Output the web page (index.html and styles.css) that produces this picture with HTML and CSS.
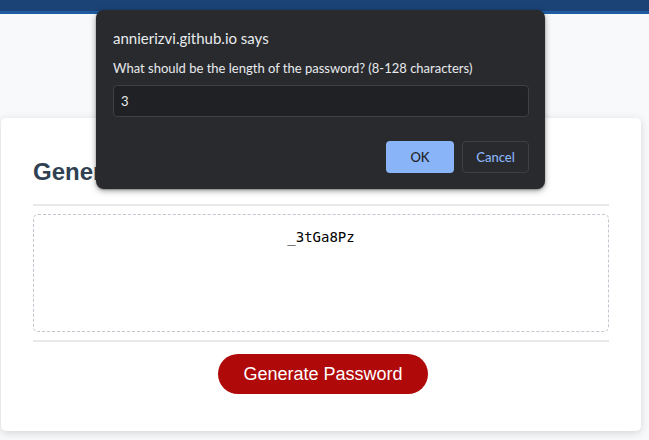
FILE: index.html
```html
<!DOCTYPE html>
<html lang="en">
<head>
<meta charset="utf-8">
<title>Password Generator</title>
<link rel="stylesheet" href="styles.css">
</head>
<body>
<header class="topbar"></header>
<main class="wrapper">
  <section class="card">
    <h2 class="card-title">Generate a Password</h2>
    <hr class="rule">
    <textarea class="password" readonly>_3tGa8Pz</textarea>
    <hr class="rule rule-bottom">
    <div class="card-footer">
      <button class="btn">Generate Password</button>
    </div>
  </section>
</main>
<div class="dialog">
  <div class="dialog-title">annierizvi.github.io says</div>
  <div class="dialog-msg">What should be the length of the password? (8-128 characters)</div>
  <div class="dialog-input">3</div>
  <div class="dialog-actions">
    <button class="dbtn dbtn-ok">OK</button>
    <button class="dbtn dbtn-cancel">Cancel</button>
  </div>
</div>
</body>
</html>
```
FILE: styles.css
```css
html, body {
  margin: 0;
  padding: 0;
}
body {
  background: #f8f9fb;
  font-family: "Liberation Sans", Arial, sans-serif;
  position: relative;
  height: 440px;
  overflow: hidden;
}
.topbar {
  height: 11px;
  background: #1b4375;
  border-bottom: 3px solid #1f5ba2;
}
.wrapper {
  padding: 104px 8px 0 1px;
}
.card {
  background: #ffffff;
  border-radius: 5px;
  box-shadow: rgba(0, 0, 0, 0.15) 0 2px 8px 0;
  padding: 40px 32px 37px;
  height: 313px;
  box-sizing: border-box;
  display: flex;
  flex-direction: column;
}
.card-title {
  margin: 0 0 18px;
  font-size: 24px;
  line-height: 28px;
  font-weight: bold;
  color: #2f4152;
}
.rule {
  margin: 0;
  border: 0;
  height: 2px;
  background: #e7e9eb;
}
.password {
  display: block;
  margin: 8px 0 0;
  height: 118px;
  box-sizing: border-box;
  width: 100%;
  border: 1px dashed #c0c7cf;
  border-radius: 5px;
  padding: 14px 15px 0;
  font-family: "DejaVu Sans Mono", monospace;
  font-size: 14px;
  line-height: 16px;
  color: #000;
  text-align: center;
  resize: none;
  overflow: hidden;
  background: #fff;
  outline: none;
}
.rule-bottom {
  margin-top: 8px;
}
.card-footer {
  display: flex;
  justify-content: center;
  padding-top: 12px;
}
.btn {
  border: none;
  background: #b00909;
  color: #fff;
  font-family: "Liberation Sans", Arial, sans-serif;
  font-size: 18px;
  line-height: 22px;
  height: 40px;
  width: 210px;
  padding: 0;
  border-radius: 20px;
  margin-left: 4px;
}
.dialog {
  position: absolute;
  left: 96px;
  top: 10px;
  width: 449px;
  box-sizing: border-box;
  padding: 18px 16px 16px 17px;
  background: #292a2d;
  border-radius: 8px;
  box-shadow: 0 2px 6px rgba(0, 0, 0, 0.35), 0 1px 2px rgba(0, 0, 0, 0.3);
  font-family: Lato, "Noto Sans", sans-serif;
  color: #e8eaed;
}
.dialog-title {
  font-size: 15px;
  line-height: 20px;
}
.dialog-msg {
  margin-top: 11px;
  font-size: 13px;
  line-height: 18px;
}
.dialog-input {
  margin-top: 8px;
  height: 32px;
  box-sizing: border-box;
  border: 1px solid #3c4043;
  border-radius: 4px;
  background: #202124;
  padding: 0 7px;
  font-size: 13px;
  line-height: 30px;
  color: #e8eaed;
}
.dialog-actions {
  margin-top: 24px;
  display: flex;
  justify-content: flex-end;
  gap: 8px;
}
.dbtn {
  height: 32px;
  box-sizing: border-box;
  border-radius: 4px;
  font-family: Lato, "Noto Sans", sans-serif;
  font-size: 13px;
  font-weight: 500;
  padding: 0;
}
.dbtn-ok {
  width: 68px;
  background: #8ab4f8;
  border: none;
  color: #202124;
}
.dbtn-cancel {
  width: 67px;
  background: transparent;
  border: 1px solid #3c4043;
  color: #8ab4f8;
}
```
